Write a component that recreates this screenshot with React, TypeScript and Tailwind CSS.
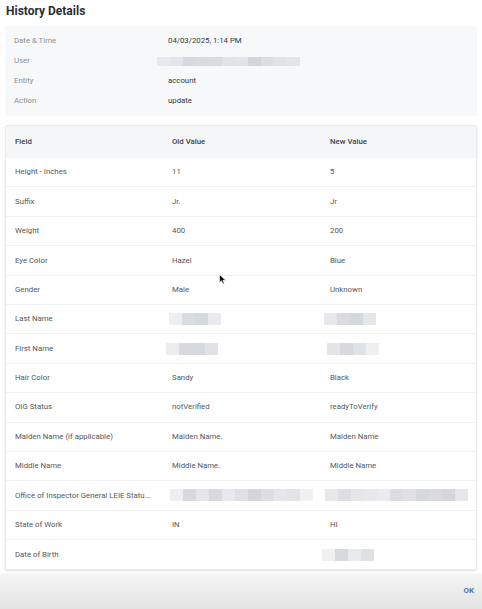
import React from "react";

type Cell = string | { blur: string[]; ml?: number };

const rows: { field: string; old: Cell; next: Cell }[] = [
  { field: "Height - Inches", old: "11", next: "5" },
  { field: "Suffix", old: "Jr.", next: "Jr" },
  { field: "Weight", old: "400", next: "200" },
  { field: "Eye Color", old: "Hazel", next: "Blue" },
  { field: "Gender", old: "Male", next: "Unknown" },
  {
    field: "Last Name",
    old: { blur: ["#eceef1", "#d9dce0", "#d5d8dc", "#e8eaed"], ml: -3 },
    next: { blur: ["#e7e8eb", "#d9dbdf", "#d4d7db", "#e3e6ea"], ml: -6 },
  },
  {
    field: "First Name",
    old: { blur: ["#ebedf0", "#d8dade", "#d6d9dd", "#e0e2e5"], ml: -6 },
    next: { blur: ["#e4e5e8", "#d8dadd", "#e0e3e6", "#eeeff1"], ml: -3 },
  },
  { field: "Hair Color", old: "Sandy", next: "Black" },
  { field: "OIG Status", old: "notVerified", next: "readyToVerify" },
  { field: "Maiden Name (if applicable)", old: "Maiden Name.", next: "Maiden Name" },
  { field: "Middle Name", old: "Middle Name.", next: "Middle Name" },
  {
    field: "Office of Inspector General LEIE Statu...",
    old: {
      blur: ["#eceef1", "#d7d9dd", "#e4e6e9", "#d8dadd", "#e7e9ec", "#dee0e3", "#d4d6da", "#dcdee1", "#e5e7ea", "#e2e4e7", "#f0f1f3"],
      ml: -2,
    },
    next: {
      blur: ["#e6e8eb", "#dcdee2", "#e4e6e9", "#e6e8ea", "#e9ebee", "#dbdde1", "#dfe1e4", "#d5d8dc", "#d9dbdf", "#d4d6da", "#e5e7ea"],
      ml: -5,
    },
  },
  { field: "State of Work", old: "IN", next: "HI" },
  {
    field: "Date of Birth",
    old: "",
    next: { blur: ["#eff0f2", "#d8dadd", "#e9eaec", "#dfe1e4"], ml: -8 },
  },
];

function Blur({ colors, ml = 0, h = 12 }: { colors: string[]; ml?: number; h?: number }) {
  return (
    <div className="flex" style={{ marginLeft: ml, height: h }}>
      {colors.map((c, i) => (
        <div key={i} className="w-[13px]" style={{ backgroundColor: c }} />
      ))}
    </div>
  );
}

function Value({ v }: { v: Cell }) {
  if (typeof v === "string") return <span>{v}</span>;
  return <Blur colors={v.blur} ml={v.ml} />;
}

export default function App() {
  return (
    <div className="relative h-[609px] w-[482px] overflow-hidden bg-white font-['Roboto',sans-serif]">
      <div className="flex h-[21px] items-center pl-[6px] text-[12px] font-bold text-[#2a2f36]">
        History Details
      </div>

      <div className="mx-[5px] mt-[5px] rounded-[2px] bg-[#f7f8f9] px-[9px] py-[5px] text-[7.8px]">
        {[
          ["Date & Time", "04/03/2025, 1:14 PM"],
          ["User", null],
          ["Entity", "account"],
          ["Action", "update"],
        ].map(([label, value]) => (
          <div key={label} className="grid h-[20px] grid-cols-[154px_1fr] items-center">
            <span className="text-[#8d8f93]">{label}</span>
            {value ? (
              <span className="text-[#34373c]">{value}</span>
            ) : (
              <Blur
                ml={-11}
                h={9}
                colors={["#e6e9ee", "#e3e5ea", "#d6d8dc", "#d8dade", "#d9dbdf", "#e0e2e6", "#e2e4e8", "#d3d5da", "#dcdee2", "#e0e2e6", "#e3e5e9"]}
              />
            )}
          </div>
        ))}
      </div>

      <div className="mx-[5px] mt-[9px] rounded-[2px] border border-[#e9eaec] shadow-[0_1px_2px_rgba(0,0,0,0.12)]">
        <div className="grid h-[32px] grid-cols-[156px_158px_1fr] items-center bg-[#f5f6f8] px-[9px] text-[7.8px] font-medium text-[#41444a]">
          <span>Field</span>
          <span className="pl-[1px]">Old Value</span>
          <span className="pl-[1px]">New Value</span>
        </div>
        {rows.map((r, i) => (
          <div
            key={r.field}
            className={`grid h-[29.4px] grid-cols-[156px_158px_1fr] items-center px-[9px] text-[7.8px] text-[#55575b] ${
              i < rows.length - 1 ? "border-b border-[#f0f1f2]" : ""
            }`}
          >
            <span className="truncate pr-2">{r.field}</span>
            <div className="pl-[1px]">
              <Value v={r.old} />
            </div>
            <div className="pl-[1px]">
              <Value v={r.next} />
            </div>
          </div>
        ))}
      </div>

      <div className="absolute inset-x-0 bottom-0 flex h-[36px] items-center justify-end bg-gradient-to-b from-[#f6f6f6] to-[#e3e3e3] pr-[8px]">
        <span className="text-[8px] font-bold text-[#4a78b8]">OK</span>
      </div>

      <svg className="absolute left-[219px] top-[274px]" width="8" height="11" viewBox="0 0 8 11">
        <path d="M0.5 0.5 L0.5 8.5 L2.5 6.8 L4 10 L5.3 9.4 L3.9 6.3 L6.6 6.3 Z" fill="#111" stroke="#fff" strokeWidth="0.6" />
      </svg>
    </div>
  );
}
